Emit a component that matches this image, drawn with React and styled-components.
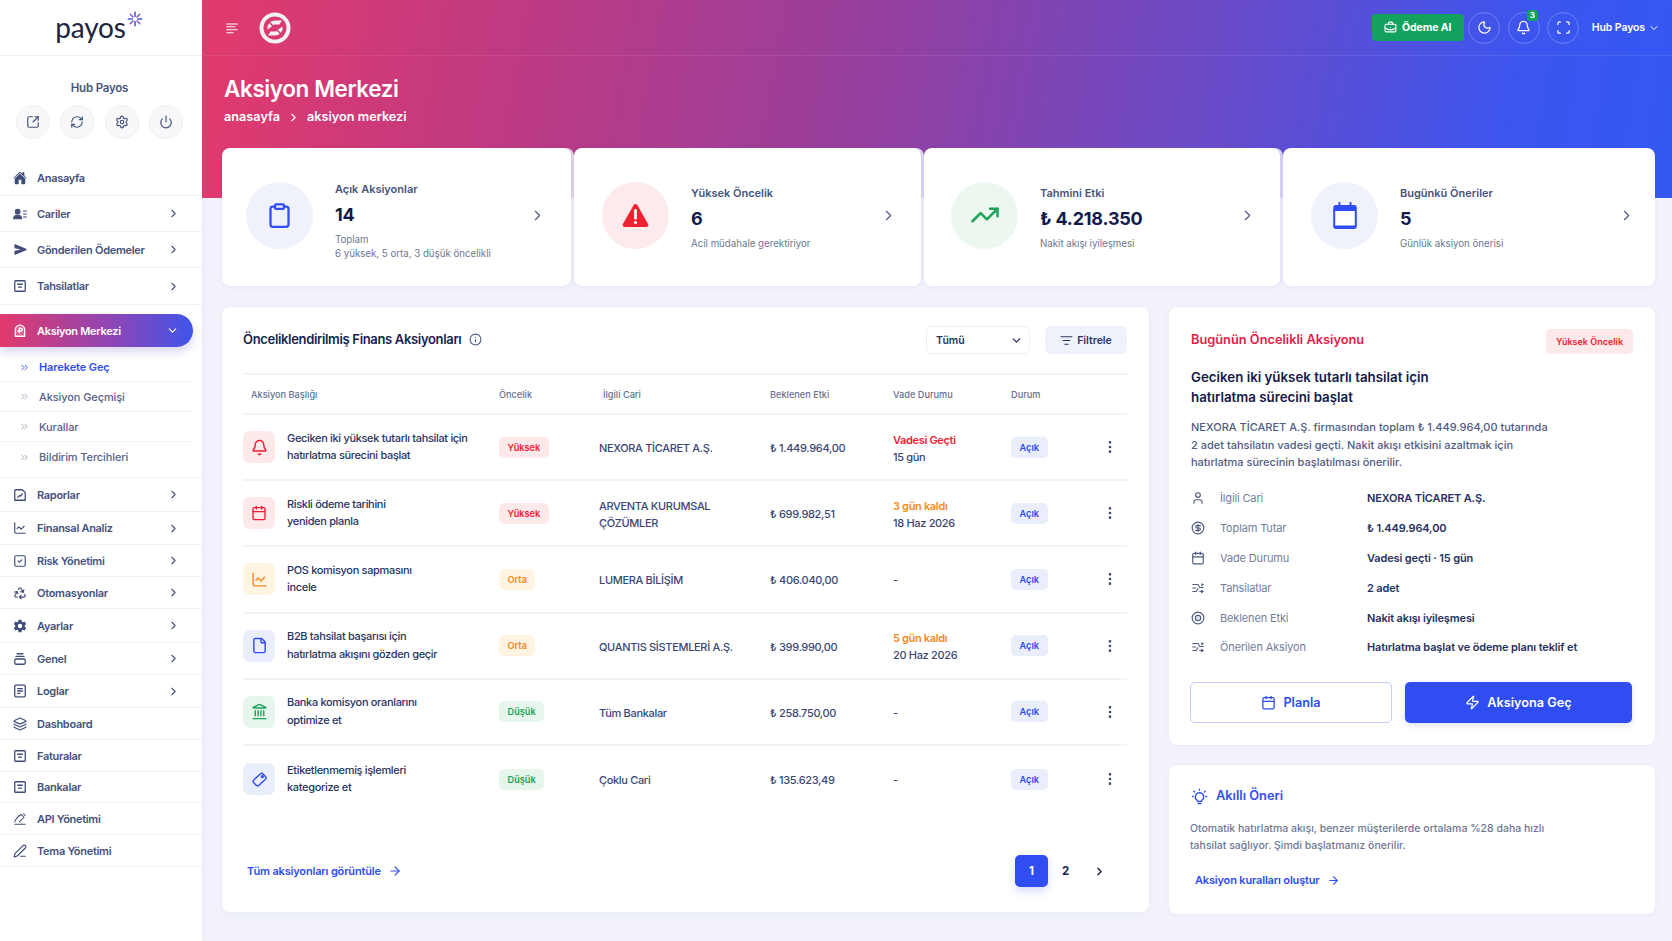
import React from 'react';
import styled, { createGlobalStyle } from 'styled-components';
import {
  SquareArrowOutUpRight, RefreshCw, Settings, Power, ChevronRight, ChevronDown, ChevronsRight,
  ChartLine, Layers, PenLine, BriefcaseBusiness, Moon, Bell, Scan, Info, ListFilter, Clipboard,
  TrendingUp, Calendar, Landmark, File, ArrowRight, EllipsisVertical, User, CircleDollarSign,
  Zap, SquareCheck, Recycle,
} from 'lucide-react';
import { IoSend, IoSettingsSharp, IoHome } from 'react-icons/io5';

const GlobalStyle = createGlobalStyle`
  html, body {
    margin: 0;
    padding: 0;
    background: #f1f2fa;
    font-family: Inter, "Noto Sans", sans-serif;
    color: #1e2a55;
  }
  * { box-sizing: border-box; }
`;

const tones = {
  red: { bg: '#fde8ea', fg: '#ee1c35' },
  orange: { bg: '#fff3e2', fg: '#f58a1f' },
  green: { bg: '#e6f6ec', fg: '#1ea35a' },
  blue: { bg: '#e9edfc', fg: '#2f4df0' },
};

const Shell = styled.div`
  display: flex;
  min-height: 941px;
  overflow: hidden;
`;

const Sidebar = styled.aside`
  width: 202px;
  flex: none;
  background: #fff;
  box-shadow: 1px 0 6px rgba(60, 70, 130, 0.05);
`;

const LogoBar = styled.div`
  height: 56px;
  display: flex;
  align-items: center;
  justify-content: center;
  border-bottom: 1px solid #f0f1f5;
  padding-right: 4px;
`;

const LogoText = styled.span`
  font-family: Lato, Inter, sans-serif;
  font-size: 28px;
  font-weight: 400;
  line-height: 1;
  color: #20243f;
  letter-spacing: -0.2px;
  margin-top: -2px;
`;

const Spark = styled.svg`
  width: 16px;
  height: 16px;
  margin: -18px 0 0 1px;
`;

const ProfileName = styled.div`
  text-align: center;
  font-size: 11.5px;
  font-weight: 600;
  letter-spacing: -0.2px;
  color: #46547d;
  margin-top: 25px;
  line-height: 14px;
  padding-right: 3px;
`;

const ProfileActions = styled.div`
  display: flex;
  justify-content: center;
  gap: 10.2px;
  margin: 10px 0 21px;
  padding-right: 3px;
`;

const RoundAction = styled.div`
  width: 34px;
  height: 34px;
  border-radius: 50%;
  background: #f8f8fa;
  border: 1px solid #f0f0f3;
  display: flex;
  align-items: center;
  justify-content: center;
  color: #44537c;
`;

const NavRow = styled.div`
  height: ${(p) => p.$h}px;
  display: flex;
  align-items: center;
  padding: 0 22px 0 13px;
  border-bottom: 1px solid #f1f2f6;
  color: #44527c;
  font-size: 11px;
  letter-spacing: -0.3px;
  font-weight: 600;
`;

const NavIcon = styled.span`
  width: 14px;
  height: 14px;
  margin-right: 10px;
  display: flex;
  align-items: center;
  justify-content: center;
  color: ${(p) => p.$color || '#3f4d78'};
`;

const NavLabel = styled.span`
  flex: 1;
  white-space: nowrap;
`;

const ActivePill = styled.div`
  height: 33px;
  width: 193px;
  margin-top: 9px;
  display: flex;
  align-items: center;
  padding: 0 14px 0 13px;
  border-radius: 0 17px 17px 0;
  background: linear-gradient(90deg, #e23a6c 0%, #8a46b8 60%, #3f55ea 100%);
  box-shadow: 0 5px 10px rgba(90, 70, 180, 0.22);
  color: #fff;
  font-size: 11px;
  letter-spacing: -0.3px;
  font-weight: 600;
`;

const SubList = styled.div`
  padding-top: 6px;
  border-bottom: 1px solid #f1f2f6;
  padding-bottom: 5px;
`;

const SubRow = styled.div`
  height: ${(p) => p.$h}px;
  display: flex;
  align-items: center;
  padding-left: 19px;
  gap: 9px;
  font-size: 11px;
  letter-spacing: -0.1px;
  font-weight: ${(p) => (p.$active ? 600 : 500)};
  color: ${(p) => (p.$active ? '#2f4df0' : '#56628a')};
  border-bottom: ${(p) => (p.$last ? 'none' : '1px solid #f3f4f7')};
  margin-right: 10px;
`;

const SubMark = styled.span`
  display: flex;
  color: ${(p) => (p.$active ? '#2f4df0' : '#9aa2bb')};
`;

const Main = styled.main`
  flex: 1;
  min-width: 0;
`;

const Hero = styled.div`
  height: 198px;
  background: linear-gradient(100deg, #e23a6c 0%, #bd3a83 22%, #963f9e 45%, #6a4bc8 68%, #3d55ee 88%, #3358f4 100%);
  color: #fff;
`;

const TopBar = styled.div`
  height: 56px;
  display: flex;
  align-items: center;
  padding: 0 12px 0 23px;
  border-bottom: 1px solid rgba(255, 255, 255, 0.09);
`;

const BrandMark = styled.svg`
  width: 32px;
  height: 32px;
  margin-left: 20px;
`;

const TopActions = styled.div`
  margin-left: auto;
  display: flex;
  align-items: center;
  gap: 7.5px;
`;

const AiButton = styled.div`
  height: 27px;
  width: 92px;
  border-radius: 4px;
  background: #13a15e;
  display: flex;
  align-items: center;
  justify-content: center;
  gap: 5px;
  font-size: 10.5px;
  letter-spacing: -0.1px;
  font-weight: 700;
  margin-right: -3px;
`;

const RoundTop = styled.div`
  width: 32px;
  height: 32px;
  border-radius: 50%;
  border: 1px solid rgba(255, 255, 255, 0.24);
  display: flex;
  align-items: center;
  justify-content: center;
  position: relative;
`;

const Count = styled.span`
  position: absolute;
  top: -3px;
  right: 1px;
  width: 11px;
  height: 11px;
  border-radius: 3px;
  background: #13a15e;
  font-size: 8px;
  font-weight: 700;
  display: flex;
  align-items: center;
  justify-content: center;
`;

const UserMenu = styled.div`
  display: flex;
  align-items: center;
  gap: 3px;
  font-size: 10.5px;
  letter-spacing: -0.1px;
  font-weight: 600;
  margin-left: 5px;
`;

const HeroTitle = styled.h1`
  margin: 19px 0 0 22px;
  font-size: 22.5px;
  letter-spacing: -0.4px;
  font-weight: 600;
  line-height: 28px;
`;

const Crumbs = styled.div`
  margin: 6px 0 0 22px;
  display: flex;
  align-items: center;
  gap: 7px;
  font-size: 12.7px;
  font-weight: 600;
  line-height: 16px;
`;

const Content = styled.div`
  margin-top: -50px;
  padding: 0 17px 0 20px;
`;

const StatGrid = styled.div`
  display: grid;
  grid-template-columns: 349fr 347fr 356fr 372fr;
  gap: 3px;
`;

const StatCard = styled.div`
  height: 138px;
  background: #fff;
  border-radius: 8px;
  box-shadow: 3px 0 0 rgba(232, 234, 250, 0.85), 0 1px 5px rgba(70, 80, 140, 0.07);
  display: flex;
  align-items: center;
  padding: 0 ${(p) => p.$right}px 4px ${(p) => p.$left}px;
  &:last-child {
    box-shadow: 0 1px 5px rgba(70, 80, 140, 0.07);
  }
`;

const StatCircle = styled.div`
  width: 67px;
  height: 67px;
  flex: none;
  border-radius: 50%;
  background: ${(p) => p.$bg};
  color: ${(p) => p.$fg};
  display: flex;
  align-items: center;
  justify-content: center;
  margin-right: 22px;
`;

const StatBody = styled.div`
  flex: 1;
  min-width: 0;
  padding-top: ${(p) => p.$top}px;
`;

const StatLabel = styled.div`
  font-size: 11px;
  font-weight: 600;
  color: #46547d;
  line-height: 14px;
`;

const StatValue = styled.div`
  font-size: 18px;
  letter-spacing: -0.2px;
  font-weight: 700;
  color: #121a4a;
  line-height: 22px;
  margin-top: 8px;
`;

const StatNote = styled.div`
  font-size: 9.7px;
  color: #6d7793;
  line-height: 14px;
  margin-top: 7px;
`;

const StatArrow = styled(ChevronRight)`
  flex: none;
  color: #4b5a85;
`;

const PanelGrid = styled.div`
  display: grid;
  grid-template-columns: 927px 486px;
  gap: 20px;
  margin-top: 21px;
  align-items: start;
`;

const Panel = styled.section`
  background: #fff;
  border-radius: 8px;
  box-shadow: 0 1px 5px rgba(70, 80, 140, 0.06);
`;

const TablePanel = styled(Panel)`
  height: 605px;
  padding: 0 22px 25px 21px;
  display: flex;
  flex-direction: column;
`;

const PanelHead = styled.div`
  height: 68px;
  display: flex;
  align-items: center;
  gap: 8px;
  border-bottom: 2px solid #f1f2f8;
`;

const PanelTitle = styled.h2`
  margin: 0 0 3px;
  font-size: 13px;
  letter-spacing: -0.33px;
  font-weight: 600;
  color: #161f4f;
`;

const InfoMark = styled(Info)`
  margin: 0 0 1px;
  color: #4b5a85;
`;

const SelectBox = styled.div`
  margin-left: auto;
  width: 104px;
  height: 28px;
  border: 1px solid #eceef6;
  border-radius: 5px;
  display: flex;
  align-items: center;
  justify-content: space-between;
  padding: 0 6px 0 9px;
  font-size: 10.5px;
  font-weight: 600;
  color: #28345f;
`;

const FilterButton = styled.div`
  width: 82px;
  height: 28px;
  margin-left: 7px;
  border-radius: 5px;
  background: #f0f2fb;
  display: flex;
  align-items: center;
  justify-content: center;
  gap: 4px;
  font-size: 10.5px;
  font-weight: 600;
  color: #28345f;
`;

const Columns = styled.div`
  display: grid;
  grid-template-columns: 256px 100px 171px 123px 118px 83px 33px;
  align-items: center;
`;

const HeadRow = styled(Columns)`
  height: 40px;
  border-bottom: 2px solid #f2f3f9;
  font-size: 9.2px;
  font-weight: 500;
  color: #66708f;
`;

const HeadCell = styled.div`
  padding-left: ${(p) => p.$pad || 0}px;
`;

const DataRow = styled(Columns)`
  height: 66.2px;
  border-bottom: ${(p) => (p.$last ? 'none' : '2px solid #f2f3f9')};
  font-size: 11px;
  letter-spacing: -0.33px;
  font-weight: 500;
  line-height: 17px;
  color: #3a4772;
`;

const ActionCell = styled.div`
  display: flex;
  align-items: center;
  gap: 12px;
`;

const ActionIcon = styled.div`
  width: 32px;
  height: 32px;
  flex: none;
  border-radius: 7px;
  background: ${(p) => tones[p.$tone].bg};
  color: ${(p) => tones[p.$tone].fg};
  display: flex;
  align-items: center;
  justify-content: center;
`;

const ActionText = styled.div`
  color: #29345f;
  line-height: 17.5px;
  white-space: pre-line;
`;

const TextCell = styled.div`
  padding-top: 3px;
  white-space: pre-line;
`;

const Chip = styled.span`
  display: inline-flex;
  align-items: center;
  height: 21px;
  padding: 0 8.5px;
  border-radius: 5px;
  background: ${(p) => tones[p.$tone].bg};
  color: ${(p) => tones[p.$tone].fg};
  font-size: 9.2px;
  letter-spacing: 0;
  font-weight: 600;
`;

const DueTop = styled.div`
  font-weight: 600;
  color: ${(p) => tones[p.$tone].fg};
`;

const Dots = styled(EllipsisVertical)`
  color: #3a4772;
  justify-self: center;
  margin-right: 2px;
`;

const TableFoot = styled.div`
  margin-top: auto;
  display: flex;
  align-items: center;
  padding-left: 4px;
`;

const BlueLink = styled.div`
  display: flex;
  align-items: center;
  gap: 7px;
  color: #2f4df0;
  font-size: 11px;
  letter-spacing: -0.17px;
  font-weight: 600;
`;

const Pager = styled.div`
  margin-left: auto;
  display: flex;
  align-items: center;
  gap: 1px;
  margin-right: 11px;
`;

const PageItem = styled.div`
  width: 33px;
  height: 32px;
  border-radius: 5px;
  display: flex;
  align-items: center;
  justify-content: center;
  font-size: 11.5px;
  font-weight: 700;
  background: ${(p) => (p.$active ? '#2f4df0' : 'transparent')};
  color: ${(p) => (p.$active ? '#fff' : '#161f4f')};
  box-shadow: ${(p) => (p.$active ? '0 4px 8px rgba(47, 77, 240, 0.2)' : 'none')};
`;

const SideStack = styled.div`
  display: flex;
  flex-direction: column;
  gap: 20px;
`;

const FocusPanel = styled(Panel)`
  height: 438px;
  padding: 22px 22px 0 22px;
`;

const FocusHead = styled.div`
  display: flex;
  align-items: flex-start;
  justify-content: space-between;
`;

const FocusTitle = styled.h2`
  margin: 0;
  font-size: 12.8px;
  line-height: 22px;
  font-weight: 600;
  color: #e11d48;
`;

const FocusBadge = styled.span`
  height: 25px;
  width: 87px;
  border-radius: 5px;
  background: #fde8ea;
  color: #ee1c35;
  font-size: 9px;
  font-weight: 600;
  display: flex;
  align-items: center;
  justify-content: center;
`;

const FocusHeading = styled.h3`
  margin: 13px 0 0;
  font-size: 13.3px;
  line-height: 20px;
  font-weight: 600;
  color: #121a4a;
`;

const FocusText = styled.p`
  margin: 12px 0 0;
  font-size: 11px;
  line-height: 17.5px;
  color: #4f5b82;
  font-weight: 500;
`;

const FactList = styled.div`
  margin-top: 12px;
`;

const FactRow = styled.div`
  height: 29.8px;
  display: grid;
  grid-template-columns: 29px 147px 1fr;
  align-items: center;
  font-size: 11px;
  letter-spacing: -0.14px;
`;

const FactIcon = styled.span`
  display: flex;
  color: #4f5b82;
`;

const FactLabel = styled.span`
  color: #737d9a;
`;

const FactValue = styled.span`
  color: #27325e;
  font-weight: 600;
`;

const ButtonRow = styled.div`
  display: grid;
  grid-template-columns: 202px 227px;
  gap: 13px;
  margin: 20px 0 0 -1px;
`;

const OutlineButton = styled.div`
  height: 41px;
  border-radius: 5px;
  border: 1px solid #c3cdf8;
  color: #2f4df0;
  font-size: 12.7px;
  font-weight: 600;
  display: flex;
  align-items: center;
  justify-content: center;
  gap: 7px;
`;

const SolidButton = styled(OutlineButton)`
  border: none;
  background: #2f4df0;
  color: #fff;
  box-shadow: 0 2px 6px rgba(47, 77, 240, 0.18);
`;

const TipPanel = styled(Panel)`
  height: 149px;
  padding: 21px 22px 0 21px;
`;

const TipHead = styled.div`
  display: flex;
  align-items: center;
  gap: 8px;
  padding-left: 1px;
  color: #2f4df0;
  font-size: 12.8px;
  font-weight: 600;
  line-height: 20px;
`;

const TipText = styled.p`
  margin: 14px 0 0;
  font-size: 10.5px;
  line-height: 17px;
  color: #6d7793;
  font-weight: 500;
`;

const TipLink = styled(BlueLink)`
  margin: 19px 0 0 5px;
`;

const Glyph = ({ size = 14, children, sw = 1.8 }) => (
  <svg width={size} height={size} viewBox="0 0 24 24" fill="none" stroke="currentColor" strokeWidth={sw} strokeLinecap="round" strokeLinejoin="round">
    {children}
  </svg>
);

const ContactIcon = () => (
  <Glyph>
    <circle cx="8" cy="8" r="4" fill="currentColor" />
    <path d="M1 20c0-4 3-6 7-6s7 2 7 6z" fill="currentColor" />
    <path d="M18 7h5M18 12h5M18 17h5" />
  </Glyph>
);
const FormIcon = () => (
  <Glyph sw={2.2}>
    <rect x="3" y="3" width="18" height="18" rx="1.5" />
    <path d="M8 9h8M9.5 14h5" />
  </Glyph>
);
const FocusIcon = () => (
  <Glyph sw={2.2}>
    <path d="M4 21V10a8 8 0 0 1 16 0v11z" fill="rgba(255,255,255,0.2)" />
    <path d="M11 7v8M11 7h2.5a2.5 2.5 0 0 1 0 5H8" />
  </Glyph>
);
const ReportIcon = () => (
  <Glyph sw={2.2}>
    <path d="M5 3h11l5 5v13H3V5a2 2 0 0 1 2-2z" />
    <path d="M8 16l3-3 2 1 3-4" />
  </Glyph>
);
const StackIcon = () => (
  <Glyph sw={2.2}>
    <path d="M7 3h10M5 7.5h14" />
    <rect x="3" y="12" width="18" height="9" rx="2" />
  </Glyph>
);
const LogIcon = () => (
  <Glyph sw={2.2}>
    <rect x="3" y="2" width="18" height="20" rx="2" />
    <path d="M8 8h8M8 12h8M8 16h4" />
  </Glyph>
);
const ApiIcon = () => (
  <Glyph>
    <path d="M3 21h18" />
    <path d="M3 17c1-4 4-8 8-11l3-2 5 5-3 3c-2 2-3 3-5 5" />
    <path d="M18 3l3 3" />
  </Glyph>
);
const DangerIcon = () => (
  <svg width="27" height="25" viewBox="0 0 24 22">
    <path d="M10.4 1.6a1.9 1.9 0 0 1 3.2 0l9.6 16.9a1.9 1.9 0 0 1-1.6 2.8H2.4a1.9 1.9 0 0 1-1.6-2.8z" fill="#ee2232" />
    <path d="M12 6.5v7" stroke="#fff" strokeWidth="2.4" strokeLinecap="round" />
    <circle cx="12" cy="17.2" r="1.4" fill="#fff" />
  </svg>
);
const FilledCalendar = () => (
  <svg width="24" height="27" viewBox="0 0 24 27" fill="none">
    <rect x="1.2" y="4" width="21.6" height="22" rx="2" fill="#fff" stroke="#2f4df0" strokeWidth="2" />
    <path d="M1 8V6a3 3 0 0 1 3-3h16a3 3 0 0 1 3 3v3H1z" fill="#2f4df0" />
    <path d="M6.5 1v4M17.5 1v4" stroke="#2f4df0" strokeWidth="2" strokeLinecap="round" />
    <path d="M2 24.5h20" stroke="#2f4df0" strokeWidth="2" />
  </svg>
);
const TuneIcon = () => (
  <Glyph>
    <path d="M3 6h9l3 5 6 0M3 18h6l3-5M15 18h6M3 12h5M18 5l3 1-3 2M18 16l3 2-3 2" />
  </Glyph>
);
const TagIcon = () => (
  <Glyph size={17} sw={2}>
    <rect x="3" y="7" width="18" height="10.5" rx="3" transform="rotate(-42 12 12)" />
    <circle cx="16" cy="8" r="1.3" />
  </Glyph>
);
const TargetIcon = () => (
  <Glyph sw={2}>
    <circle cx="12" cy="12" r="10" />
    <circle cx="12" cy="12" r="4.5" />
    <path d="M12 12h.01" />
  </Glyph>
);
const BulbIcon = () => (
  <Glyph size={17} sw={1.9}>
    <path d="M12 6.5a6 6 0 0 0-3.4 10.9c.6.5.9 1 .9 1.6h5c0-.6.3-1.1.9-1.6A6 6 0 0 0 12 6.5z" />
    <path d="M10 22h4M12 1.5v1.5M4 4.5l1.2 1.2M20 4.5l-1.2 1.2M2 12h1M21 12h1" />
  </Glyph>
);

const navTop = [
  { label: 'Anasayfa', icon: <IoHome size={14} />, h: 36, plain: true },
  { label: 'Cariler', icon: <ContactIcon />, h: 36 },
  { label: 'Gönderilen Ödemeler', icon: <IoSend size={13} />, h: 36 },
  { label: 'Tahsilatlar', icon: <FormIcon />, h: 37 },
];

const navSub = ['Harekete Geç', 'Aksiyon Geçmişi', 'Kurallar', 'Bildirim Tercihleri'];

const navBottom = [
  { label: 'Raporlar', icon: <ReportIcon />, h: 34 },
  { label: 'Finansal Analiz', icon: <ChartLine size={14} />, h: 33 },
  { label: 'Risk Yönetimi', icon: <SquareCheck size={14} />, h: 32 },
  { label: 'Otomasyonlar', icon: <Recycle size={14} />, h: 32 },
  { label: 'Ayarlar', icon: <IoSettingsSharp size={14} />, h: 34 },
  { label: 'Genel', icon: <StackIcon />, h: 32 },
  { label: 'Loglar', icon: <LogIcon />, h: 33 },
  { label: 'Dashboard', icon: <Layers size={14} />, h: 32, plain: true },
  { label: 'Faturalar', icon: <FormIcon />, h: 32, plain: true },
  { label: 'Bankalar', icon: <FormIcon />, h: 31, plain: true },
  { label: 'API Yönetimi', icon: <ApiIcon />, h: 32, plain: true },
  { label: 'Tema Yönetimi', icon: <PenLine size={14} />, h: 32, plain: true },
];

const stats = [
  { label: 'Açık Aksiyonlar', value: '14', notes: ['Toplam', '6 yüksek, 5 orta, 3 düşük öncelikli'], bg: '#eff1fb', fg: '#2f4df0', icon: <Clipboard size={27} strokeWidth={2} />, left: 24, right: 25, top: 12 },
  { label: 'Yüksek Öncelik', value: '6', notes: ['Acil müdahale gerektiriyor'], bg: '#fdeaec', fg: '#ee2232', icon: <DangerIcon />, left: 28, right: 24, top: 6 },
  { label: 'Tahmini Etki', value: '₺ 4.218.350', notes: ['Nakit akışı iyileşmesi'], bg: '#ebf7ef', fg: '#1ea35a', icon: <TrendingUp size={30} strokeWidth={2} />, left: 27, right: 24, top: 6 },
  { label: 'Bugünkü Öneriler', value: '5', notes: ['Günlük aksiyon önerisi'], bg: '#eff1fb', fg: '#2f4df0', icon: <FilledCalendar />, left: 28, right: 20, top: 6 },
];

const rows = [
  { title: 'Geciken iki yüksek tutarlı tahsilat için\nhatırlatma sürecini başlat', tone: 'red', icon: <Bell size={17} />, priority: 'Yüksek', cari: 'NEXORA TİCARET A.Ş.', amount: '₺ 1.449.964,00', due: 'Vadesi Geçti', dueTone: 'red', dueSub: '15 gün' },
  { title: 'Riskli ödeme tarihini\nyeniden planla', tone: 'red', icon: <Calendar size={16} />, priority: 'Yüksek', cari: 'ARVENTA KURUMSAL\nÇÖZÜMLER', amount: '₺ 699.982,51', due: '3 gün kaldı', dueTone: 'orange', dueSub: '18 Haz 2026' },
  { title: 'POS komisyon sapmasını\nincele', tone: 'orange', icon: <ChartLine size={17} />, priority: 'Orta', cari: 'LUMERA BİLİŞİM', amount: '₺ 406.040,00', dueSub: '-' },
  { title: 'B2B tahsilat başarısı için\nhatırlatma akışını gözden geçir', tone: 'blue', icon: <File size={17} />, priority: 'Orta', priorityTone: 'orange', cari: 'QUANTIS SİSTEMLERİ A.Ş.', amount: '₺ 399.990,00', due: '5 gün kaldı', dueTone: 'orange', dueSub: '20 Haz 2026' },
  { title: 'Banka komisyon oranlarını\noptimize et', tone: 'green', icon: <Landmark size={17} />, priority: 'Düşük', cari: 'Tüm Bankalar', amount: '₺ 258.750,00', dueSub: '-' },
  { title: 'Etiketlenmemiş işlemleri\nkategorize et', tone: 'blue', icon: <TagIcon />, priority: 'Düşük', priorityTone: 'green', cari: 'Çoklu Cari', amount: '₺ 135.623,49', dueSub: '-' },
];

const facts = [
  { icon: <User size={14} />, label: 'İlgili Cari', value: 'NEXORA TİCARET A.Ş.' },
  { icon: <CircleDollarSign size={14} />, label: 'Toplam Tutar', value: '₺ 1.449.964,00' },
  { icon: <Calendar size={14} />, label: 'Vade Durumu', value: 'Vadesi geçti · 15 gün' },
  { icon: <TuneIcon />, label: 'Tahsilatlar', value: '2 adet' },
  { icon: <TargetIcon />, label: 'Beklenen Etki', value: 'Nakit akışı iyileşmesi' },
  { icon: <TuneIcon />, label: 'Önerilen Aksiyon', value: 'Hatırlatma başlat ve ödeme planı teklif et' },
];

const NavItem = ({ item }) => (
  <NavRow $h={item.h}>
    <NavIcon>{item.icon}</NavIcon>
    <NavLabel>{item.label}</NavLabel>
    {!item.plain && <ChevronRight size={13} />}
  </NavRow>
);

const chipTone = (row) => row.priorityTone || (row.priority === 'Yüksek' ? 'red' : row.priority === 'Orta' ? 'orange' : 'green');

export default function App() {
  return (
    <>
      <GlobalStyle />
      <Shell>
        <Sidebar>
          <LogoBar>
            <LogoText>payos</LogoText>
            <Spark viewBox="0 0 24 24" fill="none" strokeWidth="2.4" strokeLinecap="round">
              <path d="M12 2v6M12 16v6M2 12h6M16 12h6" stroke="#4b5bd6" />
              <path d="M5 5l4 4M15 15l4 4M19 5l-4 4M9 15l-4 4" stroke="#8a63c9" />
            </Spark>
          </LogoBar>
          <ProfileName>Hub Payos</ProfileName>
          <ProfileActions>
            <RoundAction><SquareArrowOutUpRight size={14} /></RoundAction>
            <RoundAction><RefreshCw size={14} /></RoundAction>
            <RoundAction><Settings size={14} /></RoundAction>
            <RoundAction><Power size={14} /></RoundAction>
          </ProfileActions>
          {navTop.map((item) => <NavItem key={item.label} item={item} />)}
          <ActivePill>
            <NavIcon $color="#fff"><FocusIcon /></NavIcon>
            <NavLabel>Aksiyon Merkezi</NavLabel>
            <ChevronDown size={13} />
          </ActivePill>
          <SubList>
            {navSub.map((label, i) => (
              <SubRow key={label} $h={i === 0 ? 29 : 30} $active={i === 0} $last={i === navSub.length - 1}>
                <SubMark $active={i === 0}><ChevronsRight size={11} /></SubMark>
                {label}
              </SubRow>
            ))}
          </SubList>
          {navBottom.map((item) => <NavItem key={item.label} item={item} />)}
        </Sidebar>
        <Main>
          <Hero>
            <TopBar>
              <Glyph size={14} sw={1.8}>
                <path d="M3 5h18M3 10h14M3 15h18M3 20h11" stroke="#fff" />
              </Glyph>
              <BrandMark viewBox="0 0 32 32" fill="none">
                <circle cx="16" cy="16" r="13.5" stroke="#f2f2f2" strokeWidth="4" />
                <path d="M8.5 17.5a7.5 7.5 0 0 1 7.5-9h7l-2.6 4H16a3.6 3.6 0 0 0-3.2 2z" fill="#f2f2f2" />
                <path d="M23.5 14.5a7.5 7.5 0 0 1-7.5 9H9l2.6-4H16a3.6 3.6 0 0 0 3.2-2z" fill="#f2f2f2" />
                <path d="M8 8l16 16" stroke="#d43c78" strokeWidth="1.6" />
              </BrandMark>
              <TopActions>
                <AiButton><BriefcaseBusiness size={13} />Ödeme AI</AiButton>
                <RoundTop><Moon size={15} /></RoundTop>
                <RoundTop><Bell size={15} /><Count>3</Count></RoundTop>
                <RoundTop><Scan size={15} /></RoundTop>
                <UserMenu>Hub Payos<ChevronDown size={12} /></UserMenu>
              </TopActions>
            </TopBar>
            <HeroTitle>Aksiyon Merkezi</HeroTitle>
            <Crumbs>anasayfa<ChevronRight size={13} />aksiyon merkezi</Crumbs>
          </Hero>
          <Content>
            <StatGrid>
              {stats.map((s) => (
                <StatCard key={s.label} $left={s.left} $right={s.right}>
                  <StatCircle $bg={s.bg} $fg={s.fg}>{s.icon}</StatCircle>
                  <StatBody $top={s.top}>
                    <StatLabel>{s.label}</StatLabel>
                    <StatValue>{s.value}</StatValue>
                    <StatNote>{s.notes.map((n) => <div key={n}>{n}</div>)}</StatNote>
                  </StatBody>
                  <StatArrow size={17} strokeWidth={1.6} />
                </StatCard>
              ))}
            </StatGrid>
            <PanelGrid>
              <TablePanel>
                <PanelHead>
                  <PanelTitle>Önceliklendirilmiş Finans Aksiyonları</PanelTitle>
                  <InfoMark size={13} />
                  <SelectBox>Tümü<ChevronDown size={13} strokeWidth={2.5} /></SelectBox>
                  <FilterButton><ListFilter size={13} />Filtrele</FilterButton>
                </PanelHead>
                <HeadRow>
                  <HeadCell $pad={8}>Aksiyon Başlığı</HeadCell>
                  <HeadCell>Öncelik</HeadCell>
                  <HeadCell $pad={4}>İlgili Cari</HeadCell>
                  <HeadCell>Beklenen Etki</HeadCell>
                  <HeadCell>Vade Durumu</HeadCell>
                  <HeadCell>Durum</HeadCell>
                  <HeadCell />
                </HeadRow>
                {rows.map((r, i) => (
                  <DataRow key={r.title} $last={i === rows.length - 1}>
                    <ActionCell>
                      <ActionIcon $tone={r.tone}>{r.icon}</ActionIcon>
                      <ActionText>{r.title}</ActionText>
                    </ActionCell>
                    <div><Chip $tone={chipTone(r)}>{r.priority}</Chip></div>
                    <TextCell>{r.cari}</TextCell>
                    <TextCell>{r.amount}</TextCell>
                    <TextCell>
                      {r.due && <DueTop $tone={r.dueTone}>{r.due}</DueTop>}
                      <div>{r.dueSub}</div>
                    </TextCell>
                    <div><Chip $tone="blue">Açık</Chip></div>
                    <Dots size={16} strokeWidth={2} />
                  </DataRow>
                ))}
                <TableFoot>
                  <BlueLink>Tüm aksiyonları görüntüle <ArrowRight size={14} /></BlueLink>
                  <Pager>
                    <PageItem $active>1</PageItem>
                    <PageItem>2</PageItem>
                    <PageItem><ChevronRight size={13} strokeWidth={2.5} /></PageItem>
                  </Pager>
                </TableFoot>
              </TablePanel>
              <SideStack>
                <FocusPanel>
                  <FocusHead>
                    <FocusTitle>Bugünün Öncelikli Aksiyonu</FocusTitle>
                    <FocusBadge>Yüksek Öncelik</FocusBadge>
                  </FocusHead>
                  <FocusHeading>Geciken iki yüksek tutarlı tahsilat için<br />hatırlatma sürecini başlat</FocusHeading>
                  <FocusText>
                    NEXORA TİCARET A.Ş. firmasından toplam ₺ 1.449.964,00 tutarında<br />
                    2 adet tahsilatın vadesi geçti. Nakit akışı etkisini azaltmak için<br />
                    hatırlatma sürecinin başlatılması önerilir.
                  </FocusText>
                  <FactList>
                    {facts.map((f) => (
                      <FactRow key={f.label}>
                        <FactIcon>{f.icon}</FactIcon>
                        <FactLabel>{f.label}</FactLabel>
                        <FactValue>{f.value}</FactValue>
                      </FactRow>
                    ))}
                  </FactList>
                  <ButtonRow>
                    <OutlineButton><Calendar size={15} />Planla</OutlineButton>
                    <SolidButton><Zap size={15} />Aksiyona Geç</SolidButton>
                  </ButtonRow>
                </FocusPanel>
                <TipPanel>
                  <TipHead><BulbIcon />Akıllı Öneri</TipHead>
                  <TipText>
                    Otomatik hatırlatma akışı, benzer müşterilerde ortalama %28 daha hızlı<br />
                    tahsilat sağlıyor. Şimdi başlatmanız önerilir.
                  </TipText>
                  <TipLink>Aksiyon kuralları oluştur <ArrowRight size={13} /></TipLink>
                </TipPanel>
              </SideStack>
            </PanelGrid>
          </Content>
        </Main>
      </Shell>
    </>
  );
}
